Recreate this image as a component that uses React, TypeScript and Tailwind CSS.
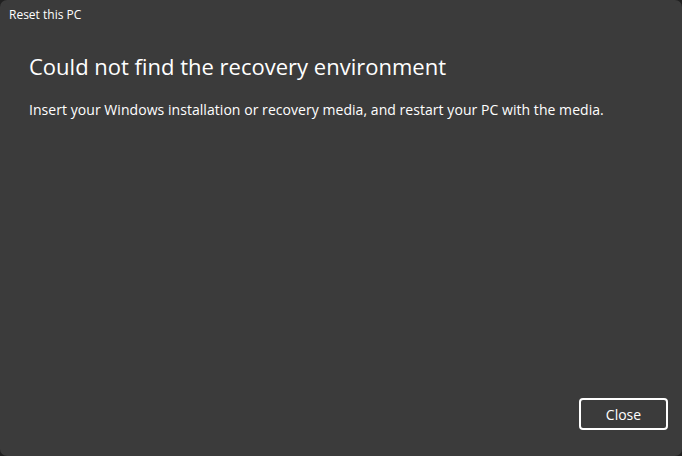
export default function App() {
  return (
    <div className="h-[456px] w-[682px] bg-[#202020]">
      <div
        className="flex h-full w-full flex-col rounded-[7px] bg-[#3b3b3b] text-white"
        style={{ fontFamily: '"Segoe UI", "Open Sans", sans-serif' }}
      >
        <div className="h-[32px] pl-[9px] pt-[7px] text-[12px] leading-[16px]">Reset this PC</div>
        <div className="flex flex-1 flex-col pl-[29px] pr-[14px] pt-[19px]">
          <h1 className="text-[22px] leading-[30px] font-normal">Could not find the recovery environment</h1>
          <p className="mt-[19px] text-[14px] leading-[20px] tracking-[0.05px]">
            Insert your Windows installation or recovery media, and restart your PC with the media.
          </p>
          <div className="mt-auto flex justify-end pb-[26px]">
            <button
              type="button"
              className="h-[32px] w-[89px] rounded-[4px] border-2 border-white text-[14px] text-white"
            >
              Close
            </button>
          </div>
        </div>
      </div>
    </div>
  );
}
